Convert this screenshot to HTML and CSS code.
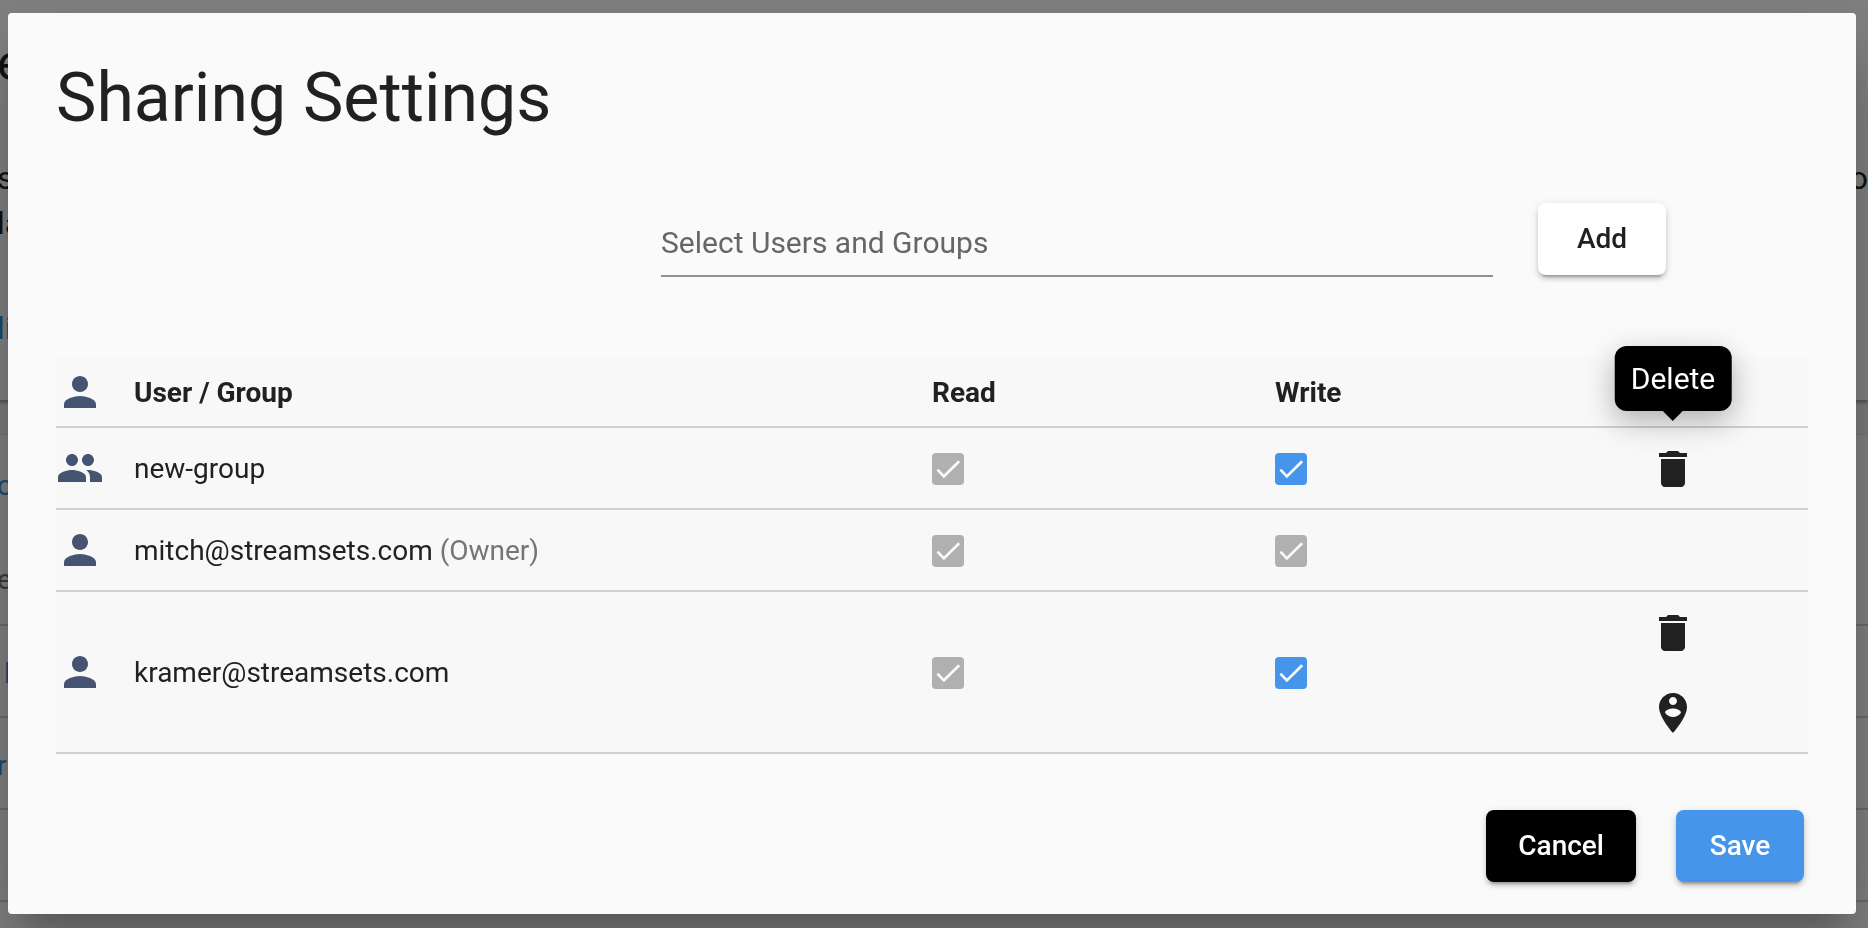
FILE: index.html
```html
<!DOCTYPE html>
<html lang="en">
  <head>
    <meta charset="UTF-8" />
    <meta name="viewport" content="width=device-width, initial-scale=1.0" />
    <title>Sharing Settings</title>
    <link rel="stylesheet" href="styles.css">
  </head>
  <body>
    <svg class="sprite" aria-hidden="true">
      <symbol id="person" viewBox="0 0 24 24">
        <path d="M12 12c2.21 0 4-1.79 4-4s-1.79-4-4-4-4 1.79-4 4 1.79 4 4 4zm0 2c-2.67 0-8 1.34-8 4v2h16v-2c0-2.66-5.33-4-8-4z" />
      </symbol>
      <symbol id="group" viewBox="0 0 24 24">
        <path d="M16 11c1.66 0 2.99-1.34 2.99-3S17.66 5 16 5c-1.66 0-3 1.34-3 3s1.34 3 3 3zm-8 0c1.66 0 2.99-1.34 2.99-3S9.66 5 8 5C6.34 5 5 6.34 5 8s1.34 3 3 3zm0 2c-2.33 0-7 1.17-7 3.5V19h14v-2.5c0-2.33-4.67-3.5-7-3.5zm8 0c-.29 0-.62.02-.97.05 1.16.84 1.97 1.97 1.97 3.45V19h6v-2.5c0-2.33-4.67-3.5-7-3.5z" />
      </symbol>
      <symbol id="trash" viewBox="0 0 24 24">
        <path d="M6 19c0 1.1.9 2 2 2h8c1.1 0 2-.9 2-2V7H6v12zM19 4h-3.5l-1-1h-5l-1 1H5v2h14V4z" />
      </symbol>
      <symbol id="pin" viewBox="0 0 24 24">
        <path d="M12 2C8.14 2 5 5.14 5 9c0 5.25 7 13 7 13s7-7.75 7-13c0-3.86-3.14-7-7-7zm0 2c1.1 0 2 .9 2 2s-.9 2-2 2-2-.9-2-2 .9-2 2-2zm0 10c-1.67 0-3.14-.85-4-2.15.02-1.32 2.67-2.05 4-2.05s3.98.73 4 2.05c-.86 1.3-2.33 2.15-4 2.15z" />
      </symbol>
    </svg>

    <div class="page">
      <div class="card intro">
        <div class="page-title">e</div>
        <div class="page-text"><span>s</span><span>o</span></div>
        <div class="page-text">la</div>
        <a href="#" class="page-link">li</a>
      </div>
      <div class="card list">
        <div class="list-head">
          <a href="#">o</a>
          <span>e</span>
        </div>
        <div class="list-row"><a href="#">&nbsp;l</a></div>
        <div class="list-row"><a href="#">r</a></div>
        <div class="list-row"></div>
        <div class="list-row"></div>
      </div>
    </div>

    <div class="overlay">
      <div class="dialog" role="dialog" aria-labelledby="dialog-title">
        <h1 id="dialog-title">Sharing Settings</h1>

        <form class="add-form">
          <input type="text" class="user-input" placeholder="Select Users and Groups" aria-label="Select Users and Groups" />
          <button type="button" class="btn add">Add</button>
        </form>

        <table class="sharing">
          <thead>
            <tr>
              <th class="col-icon"><svg class="icon"><use href="#person" /></svg></th>
              <th>User / Group</th>
              <th class="col-read">Read</th>
              <th class="col-write">Write</th>
              <th class="col-actions"></th>
            </tr>
          </thead>
          <tbody>
            <tr>
              <td><svg class="icon"><use href="#group" /></svg></td>
              <td>new-group</td>
              <td><input type="checkbox" aria-label="new-group read" checked disabled /></td>
              <td><input type="checkbox" aria-label="new-group write" checked /></td>
              <td>
                <button type="button" class="icon-btn" aria-label="Delete">
                  <svg class="icon"><use href="#trash" /></svg>
                  <span class="tooltip">Delete</span>
                </button>
              </td>
            </tr>
            <tr>
              <td><svg class="icon"><use href="#person" /></svg></td>
              <td>mitch@streamsets.com <span class="owner">(Owner)</span></td>
              <td><input type="checkbox" aria-label="mitch read" checked disabled /></td>
              <td><input type="checkbox" aria-label="mitch write" checked disabled /></td>
              <td></td>
            </tr>
            <tr>
              <td><svg class="icon"><use href="#person" /></svg></td>
              <td>kramer@streamsets.com</td>
              <td><input type="checkbox" aria-label="kramer read" checked disabled /></td>
              <td><input type="checkbox" aria-label="kramer write" checked /></td>
              <td>
                <button type="button" class="icon-btn" aria-label="Delete">
                  <svg class="icon"><use href="#trash" /></svg>
                </button>
                <button type="button" class="icon-btn" aria-label="Make owner">
                  <svg class="icon"><use href="#pin" /></svg>
                </button>
              </td>
            </tr>
          </tbody>
        </table>

        <div class="actions">
          <button type="button" class="btn cancel">Cancel</button>
          <button type="button" class="btn save">Save</button>
        </div>
      </div>
    </div>
  </body>
</html>
```
FILE: styles.css
```css
* {
  box-sizing: border-box;
}
body {
  margin: 0;
  height: 100vh;
  overflow: hidden;
  font-family: Roboto, "Liberation Sans", sans-serif;
  font-size: 28px;
  color: #212121;
  background-color: #f0f0f0;
}
a {
  color: #3a8fd8;
  text-decoration: none;
}
.sprite {
  display: none;
}

/* page behind the dialog */
.page {
  margin-left: -3px;
  font-size: 32px;
}
.card {
  background-color: #fafafa;
  box-shadow: 0 2px 4px rgba(0, 0, 0, 0.4);
}
.intro {
  height: 400px;
  padding-top: 32px;
  line-height: 45px;
}
.page-title {
  margin-bottom: 62px;
  font-size: 50px;
  line-height: 62px;
}
.page-text {
  display: flex;
  justify-content: space-between;
}
.page-link {
  display: block;
  margin-top: 60px;
}
.list {
  margin-top: 35px;
}
.list-head {
  display: flex;
  flex-direction: column;
  height: 191px;
  padding-top: 31px;
  gap: 54px;
  font-size: 28px;
  line-height: 40px;
  color: #757575;
  border-bottom: 2px solid #d0d0d0;
}
.list-row {
  height: 92px;
  font-size: 28px;
  line-height: 96px;
  border-bottom: 2px solid #d0d0d0;
}

.overlay {
  position: fixed;
  inset: 0;
  padding: 13px 12px 14px 8px;
  background-color: rgba(0, 0, 0, 0.48);
}
.dialog {
  padding: 48px 48px 32px;
  border-radius: 4px;
  background-color: #fafafa;
  box-shadow: 0 22px 30px -14px rgba(0, 0, 0, 0.2),
    0 48px 76px 6px rgba(0, 0, 0, 0.14), 0 18px 92px 16px rgba(0, 0, 0, 0.12);
}
h1 {
  margin: 0;
  font-size: 68px;
  font-weight: 400;
  line-height: 74px;
}

.add-form {
  display: grid;
  grid-template-columns: 8fr 11fr auto;
  align-items: start;
  margin: 68px 142px 81px 0;
}
.user-input {
  grid-column: 2;
  width: 100%;
  height: 74px;
  padding: 6px 0 0;
  border: none;
  border-bottom: 2px solid #8f918f;
  background: none;
  font-family: inherit;
  font-size: 30px;
}
.user-input::placeholder {
  color: #666;
}

.btn {
  min-width: 128px;
  height: 72px;
  padding: 0 32px 2px;
  border: none;
  border-radius: 8px;
  font-family: inherit;
  font-size: 28px;
  font-weight: 500;
  color: #212121;
  background-color: #fff;
  box-shadow: 0 6px 2px -4px rgba(0, 0, 0, 0.2),
    0 4px 4px rgba(0, 0, 0, 0.14), 0 2px 10px rgba(0, 0, 0, 0.12);
}
.add {
  margin-left: 45px;
}
.cancel {
  color: #fff;
  background-color: #000;
}
.save {
  color: #fff;
  background-color: #4595eb;
}

.sharing {
  width: 100%;
  table-layout: fixed;
  border-spacing: 0;
  background-color: #f8f8f8;
}
th,
td {
  height: 82px;
  padding: 0;
  text-align: left;
  vertical-align: middle;
  border-bottom: 2px solid #d0d0d0;
}
th {
  height: 70px;
  font-weight: 700;
}
.col-icon {
  width: 78px;
}
.col-read {
  width: 343px;
}
.col-write {
  width: 263px;
}
.col-actions {
  width: 270px;
}
.owner {
  color: #757575;
}
.icon {
  display: block;
  width: 48px;
  height: 48px;
  fill: #455471;
}
input[type="checkbox"] {
  appearance: none;
  display: block;
  width: 32px;
  height: 32px;
  margin: 2px 0 0;
  border-radius: 4px;
  background-color: #4595eb;
}
input[type="checkbox"]:disabled {
  background-color: #b0b0b0;
}
input[type="checkbox"]:checked::before {
  content: "";
  display: block;
  height: 32px;
  background-color: #fafafa;
  clip-path: polygon(14% 55%, 20% 49%, 37% 67%, 82% 23%, 88% 29%, 37% 79%);
}

.icon-btn {
  position: relative;
  display: block;
  width: 80px;
  height: 80px;
  margin: 0 auto;
  padding: 2px 16px 0;
  border: none;
  background: none;
  font-family: inherit;
}
.icon-btn .icon {
  fill: #212121;
}
.tooltip {
  position: absolute;
  bottom: 97px;
  left: 50%;
  transform: translateX(-50%);
  padding: 0 16px;
  border-radius: 12px;
  font-size: 30px;
  line-height: 65px;
  color: #fff;
  background-color: #000;
  box-shadow: 0 10px 30px rgba(0, 0, 0, 0.3);
}
.tooltip::after {
  content: "";
  position: absolute;
  top: 100%;
  left: 50%;
  margin-left: -10px;
  border: 10px solid transparent;
  border-top-color: #000;
  border-bottom: none;
}

.actions {
  display: flex;
  justify-content: flex-end;
  gap: 40px;
  margin-top: 56px;
  padding-right: 4px;
}
```
